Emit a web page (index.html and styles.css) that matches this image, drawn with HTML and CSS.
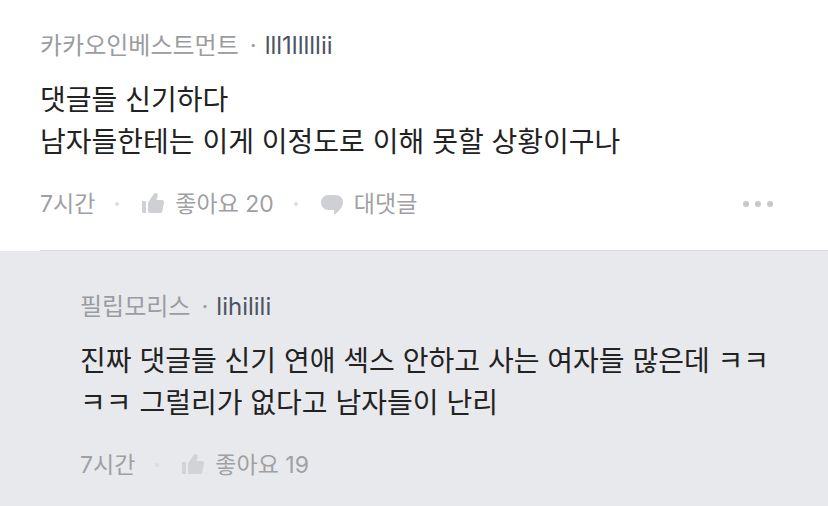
FILE: index.html
```html
<!DOCTYPE html>
<html lang="ko">
<head>
<meta charset="utf-8">
<title>댓글</title>
<link rel="stylesheet" href="styles.css">
</head>
<body>
<article class="comment">
  <header class="author"><span>카카오인베스트먼트</span><span class="sep">·</span><span class="nick">lll1lllllii</span></header>
  <p class="text">댓글들 신기하다<br>남자들한테는 이게 이정도로 이해 못할 상황이구나</p>
  <footer class="meta">
    <span class="time">7시간</span><span class="dot"></span>
    <button class="action" type="button"><svg viewBox="0 0 24 24" aria-hidden="true"><path d="M1 9h3q1 0 1 1v11H2q-1 0-1-1z"/><path d="M7 11q0-1 1-2l4-6q1-2 2.500-2c2 0 2.500 1.500 2 3.500L15.500 8H21c1.500 0 2.200 1 2 2.500l-1.600 8.500c-.3 1.400-1 2-2.400 2H9q-2 0-2-2z"/></svg><span>좋아요 20</span></button><span class="dot"></span>
    <button class="action" type="button"><svg viewBox="0 0 24 24" aria-hidden="true"><path d="M9 3h6c5 0 8 3 8 7 0 5-4 9.500-9 13v-5H9c-5 0-8-3.500-8-7.500S4 3 9 3z"/></svg><span>대댓글</span></button>
    <button class="more" type="button" aria-label="더보기"><i></i><i></i><i></i></button>
  </footer>
</article>
<div class="divider"></div>
<article class="comment reply">
  <header class="author"><span>필립모리스</span><span class="sep">·</span><span class="nick">lihilili</span></header>
  <p class="text">진짜 댓글들 신기 연애 섹스 안하고 사는 여자들 많은데 ㅋㅋㅋㅋ 그럴리가 없다고 남자들이 난리</p>
  <footer class="meta">
    <span class="time">7시간</span><span class="dot"></span>
    <button class="action" type="button"><svg viewBox="0 0 24 24" aria-hidden="true"><path d="M1 9h3q1 0 1 1v11H2q-1 0-1-1z"/><path d="M7 11q0-1 1-2l4-6q1-2 2.500-2c2 0 2.500 1.500 2 3.500L15.500 8H21c1.500 0 2.200 1 2 2.500l-1.600 8.500c-.3 1.400-1 2-2.400 2H9q-2 0-2-2z"/></svg><span>좋아요 19</span></button>
  </footer>
</article>
</body>
</html>
```
FILE: styles.css
```css
* { box-sizing: border-box; }
body { margin: 0; background: #fff; font-family: Inter, "Noto Sans CJK KR", sans-serif; color: #222; }
.comment { padding: 29px 40px; }
.author { display: flex; font-size: 24px; line-height: 34px; color: #9b9c9f; }
.sep { margin: 0 8px 0 11px; }
.nick { color: #4c5362; }
.text { margin: 16px 0 24px; font-size: 28px; line-height: 42px; word-break: break-all; }
.meta { display: flex; align-items: center; font-size: 23px; line-height: 34px; color: #9fa0a2; }
.dot { width: 4px; height: 4px; margin: 0 22px 0 20px; border-radius: 50%; background: #dddee0; }
button { border: 0; padding: 0; background: none; font: inherit; color: inherit; cursor: pointer; }
.action { display: flex; align-items: center; gap: 10px; }
svg { width: 24px; height: 24px; fill: #cfd0d4; }
.more { display: flex; gap: 6px; margin-left: auto; padding: 8px 15px; }
.more i { width: 6px; height: 6px; border-radius: 50%; background: #c8c8c9; }
.divider { height: 1px; margin-left: 40px; background: #dcdcde; }
.reply { min-height: calc(100vh - 251px); padding: 39px 40px 24px 80px; background: #e8e9ed; }
.reply .dot { background: #dcdde1; }
.reply svg { fill: #d2d3d7; }
```
